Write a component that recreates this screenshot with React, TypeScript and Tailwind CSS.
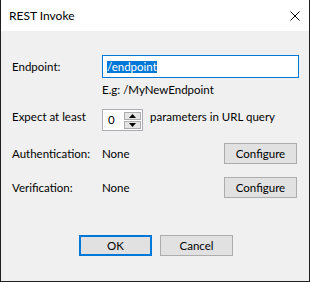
function Spinner() {
  return (
    <div className="flex h-[22px] w-[41px] border border-[#abadb3] bg-white">
      <div className="flex-1 pl-[5px] leading-[20px]">0</div>
      <div className="mr-[1px] mt-[2px] flex flex-col gap-[1px]">
        <div className="flex h-[8px] w-[17px] items-center justify-center border border-[#acacac] bg-[#e5e5e5]">
          <svg width="7" height="4" viewBox="0 0 7 4"><path d="M0 4h7L3.5 0z" fill="#000" /></svg>
        </div>
        <div className="flex h-[8px] w-[17px] items-center justify-center border border-[#acacac] bg-[#e5e5e5]">
          <svg width="7" height="4" viewBox="0 0 7 4"><path d="M0 0h7L3.5 4z" fill="#000" /></svg>
        </div>
      </div>
    </div>
  );
}

function Button({ label, focused }: { label: string; focused?: boolean }) {
  return (
    <div
      className={
        focused
          ? 'flex h-[21px] w-[73px] items-center justify-center border-2 border-[#0078d7] bg-[#e1e1e1]'
          : 'flex h-[21px] w-[73px] items-center justify-center border border-[#adadad] bg-[#e1e1e1]'
      }
    >
      {label}
    </div>
  );
}

export default function App() {
  return (
    <div
      className="flex h-[282px] w-[310px] flex-col border border-t-0 border-[#1f1f1f] bg-[#f0f0f0] text-[11.5px] leading-[16px] text-black"
      style={{ fontFamily: 'Lato, sans-serif' }}
    >
      {/* title bar */}
      <div className="flex h-[31px] items-center justify-between bg-white pl-[8px] pr-[9px] text-[12px]">
        <span>REST Invoke</span>
        <svg width="10" height="10" viewBox="0 0 10 10">
          <path d="M0.5 0.5l9 9M9.5 0.5l-9 9" stroke="#000" strokeWidth="1" />
        </svg>
      </div>

      {/* endpoint */}
      <div className="mt-[24px] flex h-[23px] items-center">
        <div className="w-[101px] pl-[11px]">Endpoint:</div>
        <div className="flex h-[23px] w-[197px] items-center border border-[#0078d7] bg-white pl-[4px]">
          <span className="bg-[#0078d7] leading-[12px] text-white">/endpoint</span>
        </div>
      </div>
      <div className="mt-[4px] pl-[101px]">E.g: /MyNewEndpoint</div>

      {/* params */}
      <div className="mt-[11px] flex items-start">
        <div className="w-[101px] pl-[11px]">Expect at least</div>
        <Spinner />
        <div className="ml-[7px]">parameters in URL query</div>
      </div>

      {/* auth */}
      <div className="mt-[12px] flex items-center">
        <div className="w-[101px] pl-[11px]">Authentication:</div>
        <div className="flex-1">None</div>
        <div className="mr-[12px]">
          <Button label="Configure" />
        </div>
      </div>

      <div className="mt-[13px] flex items-center">
        <div className="w-[101px] pl-[11px]">Verification:</div>
        <div className="flex-1">None</div>
        <div className="mr-[12px]">
          <Button label="Configure" />
        </div>
      </div>

      <div className="mt-[37px] flex gap-[8px] pl-[78px]">
        <Button label="OK" focused />
        <Button label="Cancel" />
      </div>
    </div>
  );
}
